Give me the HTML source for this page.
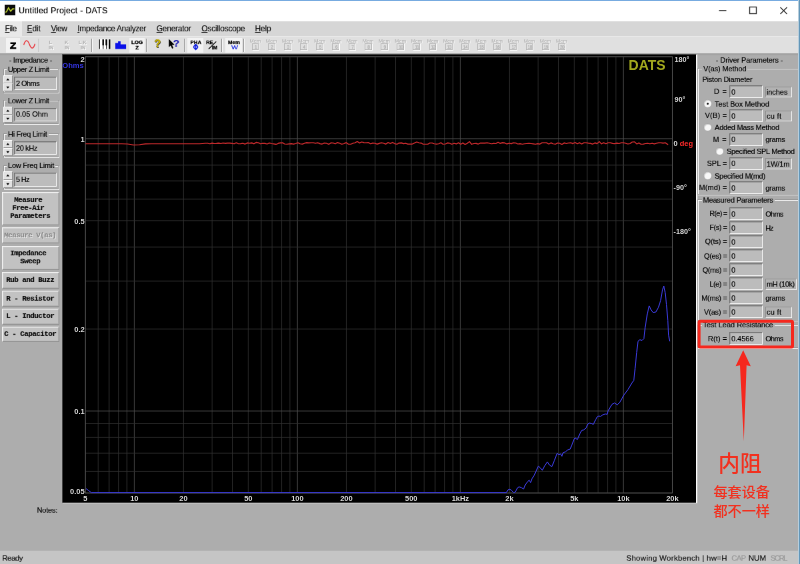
<!DOCTYPE html><html><head><meta charset="utf-8"><title>Untitled Project - DATS</title><style>
html,body{margin:0;padding:0;background:#adadad;}
body{width:800px;height:564px;overflow:hidden;position:relative;font-family:"Liberation Sans",sans-serif;}
#app{position:absolute;left:0;top:0;width:1200px;height:846px;transform:scale(0.6666667);transform-origin:0 0;background:#adadad;overflow:hidden;color:#000;-webkit-text-stroke-width:0.2px;will-change:transform;}
#app div,#app span{position:absolute;box-sizing:border-box;}
.t{white-space:nowrap;line-height:1;}
.titlebar{left:0;top:0;width:1200px;height:32px;background:#fff;border-top:1.5px solid #4a8fd6;}
.menubar{left:0;top:32px;width:1200px;height:22px;background:#d6d6d6;}
.toolbar{left:0;top:54px;width:1200px;height:26px;background:#e0e0e0;border-top:1px solid #eaeaea;}
.tbline{left:0;top:80px;width:1200px;height:2.5px;background:linear-gradient(#9c9c9c,#a8a8a8);}
.status{left:0;top:826px;width:1200px;height:20px;background:#c5c5c5;}
.rborder{left:1196.5px;top:0;width:3.5px;height:846px;background:linear-gradient(90deg,#b9c6cf,#cfe4f2 40%,#5b93b8 60%,#4b84aa);}
.graph{background:#000;border-top:1px solid #555;border-left:1px solid #555;border-right:2px solid #fbfbfb;border-bottom:1.6px solid #f0f0f0;}
.grp{border:1px solid #959595;box-shadow:1px 1px 0 #fdfdfd, inset 1px 1px 0 #fdfdfd;}
.leg{background:#adadad;padding:0 2px;}
.fld{background:#bcbcbc;border:1px solid;border-color:#707070 #fcfcfc #fcfcfc #707070;box-shadow:inset 1px 1px 0 #9a9a9a;}
.btn{background:#c2c2c2;border:1px solid;border-color:#f6f6f6 #8e8e8e #8e8e8e #f6f6f6;box-shadow:inset -1px -1px 0 #b0b0b0,inset 1px 1px 0 #d4d4d4;}
.unit{background:#b2b2b2;border:1px solid;border-color:#8c8c8c #f6f6f6 #f6f6f6 #8c8c8c;}
.spin{background:#e2e2e2;border:1px solid;border-color:#fff #8c8c8c #8c8c8c #fff;}
.mono{font-family:"Liberation Mono",monospace;font-weight:bold;letter-spacing:-0.6px;color:#0a0a0a;}
.dis{color:#8a8a8a;text-shadow:1px 1px 0 #f0f0f0;}
.radio{border-radius:50%;background:#f8f8f8;border:1px solid #a6a6a6;box-shadow:inset 1px 1px 1px #c8c8c8;}
.dot{border-radius:50%;background:#111;}
.menu u{text-decoration:underline;}
.sep{width:2px;background:#8e8e8e;border-right:1px solid #fafafa;}
.pressed{background:#f3f3f3;}
svg{position:absolute;left:0;top:0;overflow:visible;}
#ov{will-change:transform;}
</style></head><body>
<div id="app">
<div class="titlebar">
<svg width="16" height="16" viewBox="0 0 12 12" style="left:6.5px;top:6px"><rect width="12" height="12" fill="#0b0b0b"/><polyline points="0.8,8.6 2,8 4.3,3.6 6.8,7.4 9,4.6 11,4.8" fill="none" stroke="#b5c92c" stroke-width="1.3"/></svg>
<span id="t_UntitledProjectDATS_18_9" class="t " style="top:8.52px;font-size:12.5px;left:28.05px;letter-spacing:0.227px;color:#000;">Untitled Project - DATS</span>
<svg width="120" height="30" viewBox="0 0 120 30" style="left:1070px;top:0px" fill="none" stroke="#2a2a2a" stroke-width="1.4"><path d="M8.5 14.8h11"/><rect x="54.5" y="9.5" width="10" height="10"/><path d="M100.5 10l10 10M110.5 10l-10 10"/></svg>
</div>
<div class="menubar menu">
<div class="" style="left:0.00px;top:0.00px;width:33.00px;height:21.60px;background:#e9e9e9;"></div>
<span id="t_File_5_7" class="t " style="top:5.27px;font-size:12px;left:7.50px;letter-spacing:-0.452px;color:#111;"><u>F</u>ile</span>
<span id="t_Edit_27_7" class="t " style="top:5.27px;font-size:12px;left:40.50px;letter-spacing:-0.113px;color:#111;"><u>E</u>dit</span>
<span id="t_View_51_7" class="t " style="top:5.27px;font-size:12px;left:76.50px;letter-spacing:-0.453px;color:#111;"><u>V</u>iew</span>
<span id="t_ImpedanceAnalyzer_77_7" class="t " style="top:5.27px;font-size:12px;left:116.25px;letter-spacing:-0.334px;color:#111;"><u>I</u>mpedance Analyzer</span>
<span id="t_Generator_156_7" class="t " style="top:5.27px;font-size:12px;left:234.75px;letter-spacing:-0.255px;color:#111;"><u>G</u>enerator</span>
<span id="t_Oscilloscope_201_7" class="t " style="top:5.27px;font-size:12px;left:302.25px;letter-spacing:-0.233px;color:#111;"><u>O</u>scilloscope</span>
<span id="t_Help_255_7" class="t " style="top:5.27px;font-size:12px;left:382.50px;letter-spacing:-0.172px;color:#111;"><u>H</u>elp</span>
</div>
<div class="toolbar">
<div class="pressed" style="left:9.00px;top:1.95px;width:21.00px;height:22.50px;"><span id="t_Z_3_7" class="t " style="top:4.76px;font-size:13.5px;left:5.85px;color:#000;font-weight:bold;-webkit-text-stroke:.9px #000;transform:scaleX(1.12);transform-origin:0 0;">Z</span></div>
<div class="" style="left:33.00px;top:1.95px;width:22.50px;height:22.50px;"><svg width="22.50" height="22.50" viewBox="0 0 15 15" style="left:0;top:0;"><path d="M1.75 6.9C3.5 1.4 5.5 1.4 7.4 6.4S11.3 11.4 13 5.8" fill="none" stroke="#e8333a" stroke-width="1"/></svg></div>
<div class="sep" style="left:58px;top:3px;height:20px;"></div>
<span id="t_L_50_5" class="t " style="top:4.58px;font-size:7.5px;left:75.75px;transform:translateX(-50%);color:#b4b4b4;font-weight:bold;text-shadow:1px 1px 0 #fff;">L</span>
<span id="t_IN_51_10" class="t " style="top:12.68px;font-size:7.5px;left:76.65px;transform:translateX(-50%);color:#b4b4b4;font-weight:bold;text-shadow:1px 1px 0 #fff;">IN</span>
<span id="t_K_66_5" class="t " style="top:4.58px;font-size:7.5px;left:99.75px;transform:translateX(-50%);color:#b4b4b4;font-weight:bold;text-shadow:1px 1px 0 #fff;">K</span>
<span id="t_IN_67_10" class="t " style="top:12.68px;font-size:7.5px;left:100.65px;transform:translateX(-50%);color:#b4b4b4;font-weight:bold;text-shadow:1px 1px 0 #fff;">IN</span>
<span id="t_LK_82_5" class="t " style="top:4.58px;font-size:7.5px;left:123.75px;transform:translateX(-50%);color:#b4b4b4;font-weight:bold;text-shadow:1px 1px 0 #fff;">L K</span>
<span id="t_IN_83_10" class="t " style="top:12.68px;font-size:7.5px;left:124.65px;transform:translateX(-50%);color:#b4b4b4;font-weight:bold;text-shadow:1px 1px 0 #fff;">IN</span>
<div class="sep" style="left:137px;top:3px;height:20px;"></div>
<div class="" style="left:145.50px;top:1.95px;width:22.50px;height:22.50px;"><svg width="22.50" height="22.50" viewBox="0 0 15 15" style="left:0;top:0;"><rect x="1.3" y="1" width="12.2" height="10.4" fill="#fff"/><g fill="#000"><rect x="1.8" y="1.4" width=".8" height="9.6"/><rect x="5" y="1.4" width="1.6" height="6"/><rect x="5.5" y="7" width=".7" height="4"/><rect x="8.2" y="1.4" width="1.7" height="6"/><rect x="8.8" y="7" width=".7" height="4"/><rect x="11.4" y="1.4" width="1.6" height="9.6"/></g></svg></div>
<div class="" style="left:169.50px;top:1.95px;width:22.50px;height:22.50px;"><svg width="22.50" height="22.50" viewBox="0 0 15 15" style="left:0;top:0;"><path d="M2 11V5h2.75V3.3h2.5v3h5.5V11z" fill="#0a10e8"/></svg></div>
<div class="pressed" style="left:194.25px;top:1.95px;width:22.50px;height:22.50px;"><span id="t_LOG_7_4" class="t " style="top:3.29px;font-size:8px;left:11.40px;transform:translateX(-50%);color:#000;font-weight:bold;-webkit-text-stroke:.4px #000;">LOG</span><span id="t_Z_7_9" class="t " style="top:10.64px;font-size:8px;left:11.40px;transform:translateX(-50%);color:#000;font-weight:bold;-webkit-text-stroke:.4px #000;">Z</span></div>
<div class="sep" style="left:219px;top:3px;height:20px;"></div>
<div class="" style="left:225.00px;top:1.95px;width:22.50px;height:22.50px;"><span id="t__7_5" class="t " style="top:0.58px;font-size:16px;left:11.40px;transform:translateX(-50%);color:#c9b400;font-weight:bold;text-shadow:0.7px 0.7px 0 #333,-0.5px -0.5px 0 #444;">?</span></div>
<div class="" style="left:249.00px;top:1.95px;width:24.00px;height:22.50px;"><svg width="24.00" height="22.50" viewBox="0 0 16 15" style="left:0;top:0;"><path d="M2.8 1v8.2l1.9-1.7 1.4 3.1 1.3-.6-1.4-3.1h2.6z" fill="#000"/></svg><span id="t__10_5" class="t " style="top:0.22px;font-size:15.5px;left:15.45px;transform:translateX(-50%);color:#1a1ab0;font-weight:bold;">?</span></div>
<div class="sep" style="left:276px;top:3px;height:20px;"></div>
<div class="pressed" style="left:281.25px;top:1.95px;width:24.15px;height:22.50px;"><span id="t_PHA_8_4" class="t " style="top:2.78px;font-size:7.8px;left:12.60px;transform:translateX(-50%);color:#000;font-weight:bold;-webkit-text-stroke:.3px #000;">PHA</span><svg width="24.00" height="22.50" viewBox="0 0 16 15" style="left:0;top:0;"><g fill="none" stroke="#1020e0" stroke-width="1"><ellipse cx="8.4" cy="9" rx="2" ry="1.5"/><path d="M8.4 6.4v5.2M7.3 7.4l1.1-1.1 1.1 1.1M7.3 10.6l1.1 1.1 1.1-1.1"/></g></svg></div>
<div class="" style="left:306.00px;top:1.95px;width:24.00px;height:22.50px;"><svg width="24.00" height="22.50" viewBox="0 0 16 15" style="left:0;top:0;"><path d="M4.6 11L12.2 3.6" stroke="#000" stroke-width="0.85"/></svg><span id="t_RE_5_4" class="t " style="top:2.92px;font-size:7.5px;left:8.40px;transform:translateX(-50%);color:#000;font-weight:bold;-webkit-text-stroke:.3px #000;">RE</span><span id="t_IM_10_9" class="t " style="top:10.87px;font-size:7.5px;left:15.90px;transform:translateX(-50%);color:#000;font-weight:bold;-webkit-text-stroke:.3px #000;">IM</span></div>
<div class="sep" style="left:332px;top:3px;height:20px;"></div>
<div class="pressed" style="left:338.25px;top:1.95px;width:24.75px;height:22.50px;"><span id="t_Mem_8_4" class="t " style="top:2.78px;font-size:7.8px;left:12.75px;transform:translateX(-50%);color:#000;font-weight:bold;-webkit-text-stroke:.3px #000;">Mem</span><span id="t_W_8_9" class="t " style="top:10.11px;font-size:8.5px;left:13.35px;transform:translateX(-50%);color:#1020e0;transform:translateX(-50%) scaleX(1.25);">W</span></div>
<div class="sep" style="left:365px;top:3px;height:20px;"></div>
<span id="t_Mem_255_4" class="t " style="top:2.82px;font-size:7.5px;left:382.95px;transform:translateX(-50%);color:#b4b4b4;text-shadow:1px 1px 0 #fff;">Mem</span>
<div class="" style="left:377.55px;top:10.09px;width:10.80px;height:9.60px;border:1px solid #b4b4b4;box-shadow:1px 1px 0 #fff;"><span id="t_1_3_3" class="t " style="top:1.45px;font-size:6.5px;left:5.10px;transform:translateX(-50%);color:#aaa;letter-spacing:-0.5px;">1</span></div>
<span id="t_Mem_271_4" class="t " style="top:2.82px;font-size:7.5px;left:407.13px;transform:translateX(-50%);color:#b4b4b4;text-shadow:1px 1px 0 #fff;">Mem</span>
<div class="" style="left:401.73px;top:10.09px;width:10.80px;height:9.60px;border:1px solid #b4b4b4;box-shadow:1px 1px 0 #fff;"><span id="t_2_3_3" class="t " style="top:1.45px;font-size:6.5px;left:5.10px;transform:translateX(-50%);color:#aaa;letter-spacing:-0.5px;">2</span></div>
<span id="t_Mem_287_4" class="t " style="top:2.82px;font-size:7.5px;left:431.31px;transform:translateX(-50%);color:#b4b4b4;text-shadow:1px 1px 0 #fff;">Mem</span>
<div class="" style="left:425.91px;top:10.09px;width:10.80px;height:9.60px;border:1px solid #b4b4b4;box-shadow:1px 1px 0 #fff;"><span id="t_3_3_3" class="t " style="top:1.45px;font-size:6.5px;left:5.10px;transform:translateX(-50%);color:#aaa;letter-spacing:-0.5px;">3</span></div>
<span id="t_Mem_303_4" class="t " style="top:2.82px;font-size:7.5px;left:455.49px;transform:translateX(-50%);color:#b4b4b4;text-shadow:1px 1px 0 #fff;">Mem</span>
<div class="" style="left:450.09px;top:10.09px;width:10.80px;height:9.60px;border:1px solid #b4b4b4;box-shadow:1px 1px 0 #fff;"><span id="t_4_3_3" class="t " style="top:1.45px;font-size:6.5px;left:5.10px;transform:translateX(-50%);color:#aaa;letter-spacing:-0.5px;">4</span></div>
<span id="t_Mem_319_4" class="t " style="top:2.82px;font-size:7.5px;left:479.67px;transform:translateX(-50%);color:#b4b4b4;text-shadow:1px 1px 0 #fff;">Mem</span>
<div class="" style="left:474.27px;top:10.09px;width:10.80px;height:9.60px;border:1px solid #b4b4b4;box-shadow:1px 1px 0 #fff;"><span id="t_5_3_3" class="t " style="top:1.45px;font-size:6.5px;left:5.10px;transform:translateX(-50%);color:#aaa;letter-spacing:-0.5px;">5</span></div>
<span id="t_Mem_335_4" class="t " style="top:2.82px;font-size:7.5px;left:503.85px;transform:translateX(-50%);color:#b4b4b4;text-shadow:1px 1px 0 #fff;">Mem</span>
<div class="" style="left:498.45px;top:10.09px;width:10.80px;height:9.60px;border:1px solid #b4b4b4;box-shadow:1px 1px 0 #fff;"><span id="t_6_3_3" class="t " style="top:1.45px;font-size:6.5px;left:5.10px;transform:translateX(-50%);color:#aaa;letter-spacing:-0.5px;">6</span></div>
<span id="t_Mem_352_4" class="t " style="top:2.82px;font-size:7.5px;left:528.03px;transform:translateX(-50%);color:#b4b4b4;text-shadow:1px 1px 0 #fff;">Mem</span>
<div class="" style="left:522.63px;top:10.09px;width:10.80px;height:9.60px;border:1px solid #b4b4b4;box-shadow:1px 1px 0 #fff;"><span id="t_7_3_3" class="t " style="top:1.45px;font-size:6.5px;left:5.10px;transform:translateX(-50%);color:#aaa;letter-spacing:-0.5px;">7</span></div>
<span id="t_Mem_368_4" class="t " style="top:2.82px;font-size:7.5px;left:552.21px;transform:translateX(-50%);color:#b4b4b4;text-shadow:1px 1px 0 #fff;">Mem</span>
<div class="" style="left:546.81px;top:10.09px;width:10.80px;height:9.60px;border:1px solid #b4b4b4;box-shadow:1px 1px 0 #fff;"><span id="t_8_3_3" class="t " style="top:1.45px;font-size:6.5px;left:5.10px;transform:translateX(-50%);color:#aaa;letter-spacing:-0.5px;">8</span></div>
<span id="t_Mem_384_4" class="t " style="top:2.82px;font-size:7.5px;left:576.39px;transform:translateX(-50%);color:#b4b4b4;text-shadow:1px 1px 0 #fff;">Mem</span>
<div class="" style="left:570.99px;top:10.09px;width:10.80px;height:9.60px;border:1px solid #b4b4b4;box-shadow:1px 1px 0 #fff;"><span id="t_9_3_3" class="t " style="top:1.45px;font-size:6.5px;left:5.10px;transform:translateX(-50%);color:#aaa;letter-spacing:-0.5px;">9</span></div>
<span id="t_Mem_400_4" class="t " style="top:2.82px;font-size:7.5px;left:600.57px;transform:translateX(-50%);color:#b4b4b4;text-shadow:1px 1px 0 #fff;">Mem</span>
<div class="" style="left:595.17px;top:10.09px;width:10.80px;height:9.60px;border:1px solid #b4b4b4;box-shadow:1px 1px 0 #fff;"><span id="t_10_3_3" class="t " style="top:1.45px;font-size:6.5px;left:5.10px;transform:translateX(-50%);color:#aaa;letter-spacing:-0.5px;">10</span></div>
<span id="t_Mem_416_4" class="t " style="top:2.82px;font-size:7.5px;left:624.75px;transform:translateX(-50%);color:#b4b4b4;text-shadow:1px 1px 0 #fff;">Mem</span>
<div class="" style="left:619.35px;top:10.09px;width:10.80px;height:9.60px;border:1px solid #b4b4b4;box-shadow:1px 1px 0 #fff;"><span id="t_11_3_3" class="t " style="top:1.45px;font-size:6.5px;left:5.10px;transform:translateX(-50%);color:#aaa;letter-spacing:-0.5px;">11</span></div>
<span id="t_Mem_432_4" class="t " style="top:2.82px;font-size:7.5px;left:648.93px;transform:translateX(-50%);color:#b4b4b4;text-shadow:1px 1px 0 #fff;">Mem</span>
<div class="" style="left:643.53px;top:10.09px;width:10.80px;height:9.60px;border:1px solid #b4b4b4;box-shadow:1px 1px 0 #fff;"><span id="t_12_3_3" class="t " style="top:1.45px;font-size:6.5px;left:5.10px;transform:translateX(-50%);color:#aaa;letter-spacing:-0.5px;">12</span></div>
<span id="t_Mem_448_4" class="t " style="top:2.82px;font-size:7.5px;left:673.11px;transform:translateX(-50%);color:#b4b4b4;text-shadow:1px 1px 0 #fff;">Mem</span>
<div class="" style="left:667.71px;top:10.09px;width:10.80px;height:9.60px;border:1px solid #b4b4b4;box-shadow:1px 1px 0 #fff;"><span id="t_13_3_3" class="t " style="top:1.45px;font-size:6.5px;left:5.10px;transform:translateX(-50%);color:#aaa;letter-spacing:-0.5px;">13</span></div>
<span id="t_Mem_464_4" class="t " style="top:2.82px;font-size:7.5px;left:697.29px;transform:translateX(-50%);color:#b4b4b4;text-shadow:1px 1px 0 #fff;">Mem</span>
<div class="" style="left:691.89px;top:10.09px;width:10.80px;height:9.60px;border:1px solid #b4b4b4;box-shadow:1px 1px 0 #fff;"><span id="t_14_3_3" class="t " style="top:1.45px;font-size:6.5px;left:5.10px;transform:translateX(-50%);color:#aaa;letter-spacing:-0.5px;">14</span></div>
<span id="t_Mem_480_4" class="t " style="top:2.82px;font-size:7.5px;left:721.47px;transform:translateX(-50%);color:#b4b4b4;text-shadow:1px 1px 0 #fff;">Mem</span>
<div class="" style="left:716.07px;top:10.09px;width:10.80px;height:9.60px;border:1px solid #b4b4b4;box-shadow:1px 1px 0 #fff;"><span id="t_15_3_3" class="t " style="top:1.45px;font-size:6.5px;left:5.10px;transform:translateX(-50%);color:#aaa;letter-spacing:-0.5px;">15</span></div>
<span id="t_Mem_497_4" class="t " style="top:2.82px;font-size:7.5px;left:745.65px;transform:translateX(-50%);color:#b4b4b4;text-shadow:1px 1px 0 #fff;">Mem</span>
<div class="" style="left:740.25px;top:10.09px;width:10.80px;height:9.60px;border:1px solid #b4b4b4;box-shadow:1px 1px 0 #fff;"><span id="t_16_3_3" class="t " style="top:1.45px;font-size:6.5px;left:5.10px;transform:translateX(-50%);color:#aaa;letter-spacing:-0.5px;">16</span></div>
<span id="t_Mem_513_4" class="t " style="top:2.82px;font-size:7.5px;left:769.83px;transform:translateX(-50%);color:#b4b4b4;text-shadow:1px 1px 0 #fff;">Mem</span>
<div class="" style="left:764.43px;top:10.09px;width:10.80px;height:9.60px;border:1px solid #b4b4b4;box-shadow:1px 1px 0 #fff;"><span id="t_17_3_3" class="t " style="top:1.45px;font-size:6.5px;left:5.10px;transform:translateX(-50%);color:#aaa;letter-spacing:-0.5px;">17</span></div>
<span id="t_Mem_529_4" class="t " style="top:2.82px;font-size:7.5px;left:794.01px;transform:translateX(-50%);color:#b4b4b4;text-shadow:1px 1px 0 #fff;">Mem</span>
<div class="" style="left:788.61px;top:10.09px;width:10.80px;height:9.60px;border:1px solid #b4b4b4;box-shadow:1px 1px 0 #fff;"><span id="t_18_3_3" class="t " style="top:1.45px;font-size:6.5px;left:5.10px;transform:translateX(-50%);color:#aaa;letter-spacing:-0.5px;">18</span></div>
<span id="t_Mem_545_4" class="t " style="top:2.82px;font-size:7.5px;left:818.19px;transform:translateX(-50%);color:#b4b4b4;text-shadow:1px 1px 0 #fff;">Mem</span>
<div class="" style="left:812.79px;top:10.09px;width:10.80px;height:9.60px;border:1px solid #b4b4b4;box-shadow:1px 1px 0 #fff;"><span id="t_19_3_3" class="t " style="top:1.45px;font-size:6.5px;left:5.10px;transform:translateX(-50%);color:#aaa;letter-spacing:-0.5px;">19</span></div>
<span id="t_Mem_561_4" class="t " style="top:2.82px;font-size:7.5px;left:842.37px;transform:translateX(-50%);color:#b4b4b4;text-shadow:1px 1px 0 #fff;">Mem</span>
<div class="" style="left:836.97px;top:10.09px;width:10.80px;height:9.60px;border:1px solid #b4b4b4;box-shadow:1px 1px 0 #fff;"><span id="t_20_3_3" class="t " style="top:1.45px;font-size:6.5px;left:5.10px;transform:translateX(-50%);color:#aaa;letter-spacing:-0.5px;">20</span></div>
</div>
<div class="tbline"></div>
<div class="graph" style="left:93.00px;top:81.00px;width:953.25px;height:673.95px;"></div>
<span id="t_Impedance_30_60" class="t " style="top:84.83px;font-size:11px;left:45.90px;transform:translateX(-50%);letter-spacing:-0.258px;">- Impedance -</span>
<div class="grp" style="left:4.50px;top:103.05px;width:83.25px;height:36.00px;"></div>
<span id="t_UpperZLimit_6_69" class="t leg" style="top:98.78px;font-size:11px;left:10.00px;letter-spacing:-0.349px;">Upper Z Limit</span>
<div class="spin" style="left:5.10px;top:112.95px;width:13.80px;height:12.15px;"><svg width="13.5" height="12" viewBox="0 0 9 8" style="left:-1px;top:-1px"><path d="M4.5 3L6.1 5H2.9z" fill="#000"/></svg></div>
<div class="spin" style="left:5.10px;top:125.10px;width:13.80px;height:12.15px;"><svg width="13.5" height="12" viewBox="0 0 9 8" style="left:-1px;top:-1px"><path d="M4.5 5.2L6.1 3.2H2.9z" fill="#000"/></svg></div>
<div class="fld" style="left:20.55px;top:114.90px;width:64.95px;height:20.40px;"></div>
<span id="t_2Ohms_16_83" class="t " style="top:119.63px;font-size:11px;left:24.00px;letter-spacing:-0.569px;">2 Ohms</span>
<div class="grp" style="left:4.50px;top:149.85px;width:83.25px;height:36.00px;"></div>
<span id="t_LowerZLimit_6_100" class="t leg" style="top:145.58px;font-size:11px;left:10.00px;letter-spacing:-0.349px;">Lower Z Limit</span>
<div class="spin" style="left:5.10px;top:159.75px;width:13.80px;height:12.15px;"><svg width="13.5" height="12" viewBox="0 0 9 8" style="left:-1px;top:-1px"><path d="M4.5 3L6.1 5H2.9z" fill="#000"/></svg></div>
<div class="spin" style="left:5.10px;top:171.90px;width:13.80px;height:12.15px;"><svg width="13.5" height="12" viewBox="0 0 9 8" style="left:-1px;top:-1px"><path d="M4.5 5.2L6.1 3.2H2.9z" fill="#000"/></svg></div>
<div class="fld" style="left:20.55px;top:161.70px;width:64.95px;height:20.40px;"></div>
<span id="t_005Ohm_16_114" class="t " style="top:166.43px;font-size:11px;left:24.00px;letter-spacing:-0.039px;">0.05 Ohm</span>
<div class="grp" style="left:4.50px;top:200.25px;width:83.25px;height:36.00px;"></div>
<span id="t_HiFreqLimit_6_134" class="t leg" style="top:195.98px;font-size:11px;left:10.00px;letter-spacing:-0.296px;">Hi Freq Limit</span>
<div class="spin" style="left:5.10px;top:210.15px;width:13.80px;height:12.15px;"><svg width="13.5" height="12" viewBox="0 0 9 8" style="left:-1px;top:-1px"><path d="M4.5 3L6.1 5H2.9z" fill="#000"/></svg></div>
<div class="spin" style="left:5.10px;top:222.30px;width:13.80px;height:12.15px;"><svg width="13.5" height="12" viewBox="0 0 9 8" style="left:-1px;top:-1px"><path d="M4.5 5.2L6.1 3.2H2.9z" fill="#000"/></svg></div>
<div class="fld" style="left:20.55px;top:212.10px;width:64.95px;height:20.40px;"></div>
<span id="t_20kHz_16_148" class="t " style="top:216.83px;font-size:11px;left:24.00px;letter-spacing:-0.408px;">20 kHz</span>
<div class="grp" style="left:4.50px;top:247.50px;width:83.25px;height:36.00px;"></div>
<span id="t_LowFreqLimit_6_165" class="t leg" style="top:243.23px;font-size:11px;left:10.00px;letter-spacing:-0.224px;">Low Freq Limit</span>
<div class="spin" style="left:5.10px;top:257.40px;width:13.80px;height:12.15px;"><svg width="13.5" height="12" viewBox="0 0 9 8" style="left:-1px;top:-1px"><path d="M4.5 3L6.1 5H2.9z" fill="#000"/></svg></div>
<div class="spin" style="left:5.10px;top:269.55px;width:13.80px;height:12.15px;"><svg width="13.5" height="12" viewBox="0 0 9 8" style="left:-1px;top:-1px"><path d="M4.5 5.2L6.1 3.2H2.9z" fill="#000"/></svg></div>
<div class="fld" style="left:20.55px;top:259.35px;width:64.95px;height:20.40px;"></div>
<span id="t_5Hz_16_179" class="t " style="top:264.08px;font-size:11px;left:24.00px;letter-spacing:-0.669px;">5 Hz</span>
<div class="btn" style="left:3.00px;top:288.00px;width:85.50px;height:49.80px;"><span id="t_Measure_25_7" class="t mono" style="top:5.93px;font-size:11px;left:38.25px;transform:translateX(-50%);">Measure</span><span id="t_FreeAir_25_15" class="t mono" style="top:17.93px;font-size:11px;left:38.25px;transform:translateX(-50%);">Free-Air</span><span id="t_Parameters_27_23" class="t mono" style="top:29.93px;font-size:11px;left:41.25px;transform:translateX(-50%);">Parameters</span></div>
<div class="btn" style="left:3.00px;top:341.40px;width:85.50px;height:24.00px;"><span id="t_MeasureVas_27_7" class="t mono dis" style="top:5.63px;font-size:11px;left:41.25px;transform:translateX(-50%);">Measure V(as)</span></div>
<div class="btn" style="left:3.00px;top:369.00px;width:85.50px;height:36.00px;"><span id="t_Impedance_25_6" class="t mono" style="top:5.03px;font-size:11px;left:38.25px;transform:translateX(-50%);">Impedance</span><span id="t_Sweep_27_14" class="t mono" style="top:17.03px;font-size:11px;left:41.25px;transform:translateX(-50%);">Sweep</span></div>
<div class="btn" style="left:3.00px;top:408.30px;width:85.50px;height:25.05px;"><span id="t_RubandBuzz_27_7" class="t mono" style="top:6.15px;font-size:11px;left:41.25px;transform:translateX(-50%);">Rub and Buzz</span></div>
<div class="btn" style="left:3.00px;top:436.20px;width:85.50px;height:23.55px;"><span id="t_RResistor_27_7" class="t mono" style="top:5.40px;font-size:11px;left:41.25px;transform:translateX(-50%);">R - Resistor</span></div>
<div class="btn" style="left:3.00px;top:462.90px;width:85.50px;height:23.70px;"><span id="t_LInductor_27_7" class="t mono" style="top:5.48px;font-size:11px;left:41.25px;transform:translateX(-50%);">L - Inductor</span></div>
<div class="btn" style="left:3.00px;top:489.60px;width:85.50px;height:23.10px;"><span id="t_CCapacitor_27_6" class="t mono" style="top:5.18px;font-size:11px;left:41.25px;transform:translateX(-50%);">C - Capacitor</span></div>
<span id="t_DriverParameters_749_60" class="t " style="top:84.83px;font-size:11px;left:1124.10px;transform:translateX(-50%);letter-spacing:-0.104px;">- Driver Parameters -</span>
<div class="grp" style="left:1045.80px;top:102.45px;width:154.20px;height:190.05px;"></div>
<span id="t_VasMethod_701_69" class="t leg" style="top:98.33px;font-size:11px;left:1052.95px;letter-spacing:-0.128px;">V(as) Method</span>
<span id="t_PistonDiameter_702_79" class="t " style="top:113.63px;font-size:11px;left:1053.45px;letter-spacing:-0.217px;">Piston Diameter</span>
<span id="t_D_727_91" class="t " style="top:132.23px;font-size:11px;left:1090.50px;transform:translateX(-100%);letter-spacing:0.688px;">D =</span><div class="fld" style="left:1093.50px;top:127.95px;width:50.70px;height:18.90px;"></div><span id="t_0_731_91" class="t " style="top:132.53px;font-size:11px;left:1096.95px;">0</span><div class="unit" style="left:1147.50px;top:129.60px;width:40.95px;height:16.80px;"></div><span id="t_inches_766_92" class="t " style="top:132.83px;font-size:11px;left:1149.90px;letter-spacing:-0.052px;">inches</span>
<div class="radio" style="left:1055.25px;top:149.25px;width:12.60px;height:12.60px;"><div class="dot" style="left:3.30px;top:3.30px;width:3.90px;height:3.90px;left:50%;top:50%;transform:translate(-50%,-50%);"></div></div><span id="t_TestBoxMethod_714_103" class="t " style="top:150.68px;font-size:11px;left:1072.05px;letter-spacing:-0.013px;">Test Box Method</span>
<span id="t_VB_727_115" class="t " style="top:168.23px;font-size:11px;left:1090.50px;transform:translateX(-100%);letter-spacing:0.253px;">V(B) =</span><div class="fld" style="left:1093.50px;top:163.95px;width:50.70px;height:18.90px;"></div><span id="t_0_731_115" class="t " style="top:168.53px;font-size:11px;left:1096.95px;">0</span><div class="unit" style="left:1147.50px;top:165.60px;width:40.95px;height:16.80px;"></div><span id="t_cuft_766_116" class="t " style="top:168.83px;font-size:11px;left:1149.90px;letter-spacing:0.341px;">cu ft</span>
<div class="radio" style="left:1055.25px;top:184.65px;width:12.60px;height:12.60px;"></div><span id="t_AddedMassMethod_714_127" class="t " style="top:186.08px;font-size:11px;left:1072.05px;letter-spacing:-0.244px;">Added Mass Method</span>
<span id="t_M_727_139" class="t " style="top:203.93px;font-size:11px;left:1090.50px;transform:translateX(-100%);letter-spacing:0.781px;">M =</span><div class="fld" style="left:1093.50px;top:199.65px;width:50.70px;height:18.90px;"></div><span id="t_0_731_139" class="t " style="top:204.23px;font-size:11px;left:1096.95px;">0</span><span id="t_grams_765_139" class="t " style="top:204.23px;font-size:11px;left:1148.25px;letter-spacing:-0.263px;">grams</span>
<div class="radio" style="left:1073.10px;top:220.80px;width:12.60px;height:12.60px;"></div><span id="t_SpecifiedSPLMethod_726_151" class="t " style="top:222.23px;font-size:11px;left:1089.90px;letter-spacing:-0.322px;">Specified SPL Method</span>
<span id="t_SPL_727_163" class="t " style="top:240.08px;font-size:11px;left:1090.50px;transform:translateX(-100%);letter-spacing:0.025px;">SPL =</span><div class="fld" style="left:1093.50px;top:235.80px;width:50.70px;height:18.90px;"></div><span id="t_0_731_163" class="t " style="top:240.38px;font-size:11px;left:1096.95px;">0</span><div class="unit" style="left:1147.50px;top:237.45px;width:40.95px;height:16.80px;"></div><span id="t_1W1m_766_163" class="t " style="top:240.68px;font-size:11px;left:1149.90px;letter-spacing:-0.069px;">1W/1m</span>
<div class="radio" style="left:1055.25px;top:257.10px;width:12.60px;height:12.60px;"></div><span id="t_SpecifiedMmd_714_175" class="t " style="top:258.53px;font-size:11px;left:1072.05px;letter-spacing:-0.289px;">Specified M(md)</span>
<span id="t_Mmd_727_187" class="t " style="top:276.38px;font-size:11px;left:1090.50px;transform:translateX(-100%);letter-spacing:0.107px;">M(md) =</span><div class="fld" style="left:1093.50px;top:272.10px;width:50.70px;height:18.90px;"></div><span id="t_0_731_187" class="t " style="top:276.68px;font-size:11px;left:1096.95px;">0</span><span id="t_grams_765_187" class="t " style="top:276.68px;font-size:11px;left:1148.25px;letter-spacing:-0.263px;">grams</span>
<div class="grp" style="left:1045.80px;top:298.80px;width:154.20px;height:181.95px;"></div>
<span id="t_MeasuredParameters_701_199" class="t leg" style="top:294.53px;font-size:11px;left:1052.50px;letter-spacing:-0.202px;">Measured Parameters</span>
<span id="t_Re_727_213" class="t " style="top:315.38px;font-size:11px;left:1090.50px;transform:translateX(-100%);letter-spacing:-0.771px;">R(e) =</span><div class="fld" style="left:1093.50px;top:311.10px;width:50.70px;height:18.90px;"></div><span id="t_0_731_213" class="t " style="top:315.68px;font-size:11px;left:1096.95px;">0</span><span id="t_Ohms_765_213" class="t " style="top:315.68px;font-size:11px;left:1148.25px;letter-spacing:-0.773px;">Ohms</span>
<span id="t_Fs_727_227" class="t " style="top:336.42px;font-size:11px;left:1090.50px;transform:translateX(-100%);letter-spacing:-0.464px;">F(s) =</span><div class="fld" style="left:1093.50px;top:332.14px;width:50.70px;height:18.90px;"></div><span id="t_0_731_227" class="t " style="top:336.72px;font-size:11px;left:1096.95px;">0</span><span id="t_Hz_765_227" class="t " style="top:336.72px;font-size:11px;left:1148.25px;letter-spacing:-1.102px;">Hz</span>
<span id="t_Qts_727_241" class="t " style="top:357.47px;font-size:11px;left:1090.50px;transform:translateX(-100%);letter-spacing:-0.132px;">Q(ts) =</span><div class="fld" style="left:1093.50px;top:353.19px;width:50.70px;height:18.90px;"></div><span id="t_0_731_241" class="t " style="top:357.77px;font-size:11px;left:1096.95px;">0</span>
<span id="t_Qes_727_255" class="t " style="top:378.51px;font-size:11px;left:1090.50px;transform:translateX(-100%);letter-spacing:-0.355px;">Q(es) =</span><div class="fld" style="left:1093.50px;top:374.23px;width:50.70px;height:18.90px;"></div><span id="t_0_731_255" class="t " style="top:378.81px;font-size:11px;left:1096.95px;">0</span>
<span id="t_Qms_727_269" class="t " style="top:399.56px;font-size:11px;left:1090.50px;transform:translateX(-100%);letter-spacing:-0.469px;">Q(ms) =</span><div class="fld" style="left:1093.50px;top:395.28px;width:50.70px;height:18.90px;"></div><span id="t_0_731_270" class="t " style="top:399.86px;font-size:11px;left:1096.95px;">0</span>
<span id="t_Le_727_283" class="t " style="top:420.60px;font-size:11px;left:1090.50px;transform:translateX(-100%);letter-spacing:-0.466px;">L(e) =</span><div class="fld" style="left:1093.50px;top:416.32px;width:50.70px;height:18.90px;"></div><span id="t_0_731_284" class="t " style="top:420.90px;font-size:11px;left:1096.95px;">0</span><div class="unit" style="left:1147.50px;top:417.97px;width:47.25px;height:16.80px;"></div><span id="t_mH10k_766_284" class="t " style="top:421.20px;font-size:11px;left:1149.90px;letter-spacing:-0.404px;">mH (10k)</span>
<span id="t_Mms_727_297" class="t " style="top:441.65px;font-size:11px;left:1090.50px;transform:translateX(-100%);letter-spacing:-0.342px;">M(ms) =</span><div class="fld" style="left:1093.50px;top:437.37px;width:50.70px;height:18.90px;"></div><span id="t_0_731_298" class="t " style="top:441.95px;font-size:11px;left:1096.95px;">0</span><span id="t_grams_765_298" class="t " style="top:441.95px;font-size:11px;left:1148.25px;letter-spacing:-0.263px;">grams</span>
<span id="t_Vas_727_311" class="t " style="top:462.69px;font-size:11px;left:1090.50px;transform:translateX(-100%);letter-spacing:-0.181px;">V(as) =</span><div class="fld" style="left:1093.50px;top:458.41px;width:50.70px;height:18.90px;"></div><span id="t_0_731_312" class="t " style="top:462.99px;font-size:11px;left:1096.95px;">0</span><div class="unit" style="left:1147.50px;top:460.06px;width:40.95px;height:16.80px;"></div><span id="t_cuft_766_312" class="t " style="top:463.29px;font-size:11px;left:1149.90px;letter-spacing:0.341px;">cu ft</span>
<div class="grp" style="left:1045.80px;top:486.90px;width:154.20px;height:35.10px;"></div>
<span id="t_TestLeadResistance_701_325" class="t leg" style="top:482.33px;font-size:11px;left:1052.50px;letter-spacing:-0.009px;">Test Lead Resistance</span>
<span id="t_Rt_727_338" class="t " style="top:502.73px;font-size:11px;left:1090.50px;transform:translateX(-100%);letter-spacing:0.115px;">R(t) =</span><div class="fld" style="left:1093.50px;top:498.45px;width:50.70px;height:18.90px;"></div><span id="t_04566_731_338" class="t " style="top:503.03px;font-size:11px;left:1096.95px;">0.4566</span><span id="t_Ohms_765_338" class="t " style="top:503.03px;font-size:11px;left:1148.25px;letter-spacing:-0.773px;">Ohms</span>
<span id="t_Notes_37_510" class="t " style="top:760.28px;font-size:11px;left:55.50px;letter-spacing:-0.174px;">Notes:</span>
<div class="status">
<span id="t_Ready_2_7" class="t " style="top:6.04px;font-size:11.5px;left:3.30px;letter-spacing:-0.529px;color:#111;">Ready</span>
<span id="t_ShowingWorkbenchhwH_626_7" class="t " style="top:6.04px;font-size:11.5px;left:939.45px;letter-spacing:0.297px;color:#111;">Showing Workbench | hw=H</span>
<span id="t_CAP_731_7" class="t " style="top:6.04px;font-size:11.5px;left:1097.25px;letter-spacing:-0.885px;color:#9a9a9a;">CAP</span>
<span id="t_NUM_748_7" class="t " style="top:6.04px;font-size:11.5px;left:1122.75px;letter-spacing:0.016px;color:#111;">NUM</span>
<span id="t_SCRL_770_7" class="t " style="top:6.04px;font-size:11.5px;left:1155.75px;letter-spacing:-1.672px;color:#9a9a9a;">SCRL</span>
</div>
<div class="rborder"></div>
</div>
<svg id="ov" width="800" height="564" viewBox="0 0 800 564" font-family="&quot;Liberation Sans&quot;,sans-serif">
<g stroke-width="0.7" fill="none">
<line x1="85.30" y1="56.76" x2="85.30" y2="493.00" stroke="#313131"/>
<line x1="98.21" y1="56.76" x2="98.21" y2="493.00" stroke="#313131"/>
<line x1="109.12" y1="56.76" x2="109.12" y2="493.00" stroke="#313131"/>
<line x1="118.57" y1="56.76" x2="118.57" y2="493.00" stroke="#313131"/>
<line x1="126.91" y1="56.76" x2="126.91" y2="493.00" stroke="#313131"/>
<line x1="134.37" y1="56.76" x2="134.37" y2="493.00" stroke="#505050"/>
<line x1="183.44" y1="56.76" x2="183.44" y2="493.00" stroke="#313131"/>
<line x1="212.14" y1="56.76" x2="212.14" y2="493.00" stroke="#313131"/>
<line x1="232.50" y1="56.76" x2="232.50" y2="493.00" stroke="#313131"/>
<line x1="248.30" y1="56.76" x2="248.30" y2="493.00" stroke="#313131"/>
<line x1="261.21" y1="56.76" x2="261.21" y2="493.00" stroke="#313131"/>
<line x1="272.12" y1="56.76" x2="272.12" y2="493.00" stroke="#313131"/>
<line x1="281.57" y1="56.76" x2="281.57" y2="493.00" stroke="#313131"/>
<line x1="289.91" y1="56.76" x2="289.91" y2="493.00" stroke="#313131"/>
<line x1="297.37" y1="56.76" x2="297.37" y2="493.00" stroke="#505050"/>
<line x1="346.44" y1="56.76" x2="346.44" y2="493.00" stroke="#313131"/>
<line x1="375.14" y1="56.76" x2="375.14" y2="493.00" stroke="#313131"/>
<line x1="395.50" y1="56.76" x2="395.50" y2="493.00" stroke="#313131"/>
<line x1="411.30" y1="56.76" x2="411.30" y2="493.00" stroke="#313131"/>
<line x1="424.21" y1="56.76" x2="424.21" y2="493.00" stroke="#313131"/>
<line x1="435.12" y1="56.76" x2="435.12" y2="493.00" stroke="#313131"/>
<line x1="444.57" y1="56.76" x2="444.57" y2="493.00" stroke="#313131"/>
<line x1="452.91" y1="56.76" x2="452.91" y2="493.00" stroke="#313131"/>
<line x1="460.37" y1="56.76" x2="460.37" y2="493.00" stroke="#505050"/>
<line x1="509.44" y1="56.76" x2="509.44" y2="493.00" stroke="#313131"/>
<line x1="538.14" y1="56.76" x2="538.14" y2="493.00" stroke="#313131"/>
<line x1="558.50" y1="56.76" x2="558.50" y2="493.00" stroke="#313131"/>
<line x1="574.30" y1="56.76" x2="574.30" y2="493.00" stroke="#313131"/>
<line x1="587.21" y1="56.76" x2="587.21" y2="493.00" stroke="#313131"/>
<line x1="598.12" y1="56.76" x2="598.12" y2="493.00" stroke="#313131"/>
<line x1="607.57" y1="56.76" x2="607.57" y2="493.00" stroke="#313131"/>
<line x1="615.91" y1="56.76" x2="615.91" y2="493.00" stroke="#313131"/>
<line x1="623.37" y1="56.76" x2="623.37" y2="493.00" stroke="#505050"/>
<line x1="672.44" y1="56.76" x2="672.44" y2="493.00" stroke="#313131"/>
<line x1="85.30" y1="493.00" x2="672.44" y2="493.00" stroke="#313131"/>
<line x1="85.30" y1="471.44" x2="672.44" y2="471.44" stroke="#313131"/>
<line x1="85.30" y1="453.21" x2="672.44" y2="453.21" stroke="#313131"/>
<line x1="85.30" y1="437.42" x2="672.44" y2="437.42" stroke="#313131"/>
<line x1="85.30" y1="423.49" x2="672.44" y2="423.49" stroke="#313131"/>
<line x1="85.30" y1="411.03" x2="672.44" y2="411.03" stroke="#505050"/>
<line x1="85.30" y1="329.06" x2="672.44" y2="329.06" stroke="#313131"/>
<line x1="85.30" y1="281.11" x2="672.44" y2="281.11" stroke="#313131"/>
<line x1="85.30" y1="247.09" x2="672.44" y2="247.09" stroke="#313131"/>
<line x1="85.30" y1="220.70" x2="672.44" y2="220.70" stroke="#313131"/>
<line x1="85.30" y1="199.14" x2="672.44" y2="199.14" stroke="#313131"/>
<line x1="85.30" y1="180.91" x2="672.44" y2="180.91" stroke="#313131"/>
<line x1="85.30" y1="165.12" x2="672.44" y2="165.12" stroke="#313131"/>
<line x1="85.30" y1="151.19" x2="672.44" y2="151.19" stroke="#313131"/>
<line x1="85.30" y1="138.73" x2="672.44" y2="138.73" stroke="#505050"/>
<line x1="85.30" y1="56.76" x2="672.44" y2="56.76" stroke="#313131"/>
<rect x="85.30" y="56.76" width="587.14" height="436.24" stroke="#545454"/>
</g>
<g font-size="7.45" font-weight="bold" fill="#d6d6d6">
<text x="84.6" y="61.76" text-anchor="end">2</text>
<text x="84.6" y="141.53" text-anchor="end">1</text>
<text x="84.6" y="223.50" text-anchor="end">0.5</text>
<text x="84.6" y="331.86" text-anchor="end">0.2</text>
<text x="84.6" y="413.83" text-anchor="end">0.1</text>
<text x="84.6" y="494" text-anchor="end">0.05</text>
<text x="85.30" y="501.3" text-anchor="middle">5</text>
<text x="134.37" y="501.3" text-anchor="middle">10</text>
<text x="183.44" y="501.3" text-anchor="middle">20</text>
<text x="248.30" y="501.3" text-anchor="middle">50</text>
<text x="297.37" y="501.3" text-anchor="middle">100</text>
<text x="346.44" y="501.3" text-anchor="middle">200</text>
<text x="411.30" y="501.3" text-anchor="middle">500</text>
<text x="460.37" y="501.3" text-anchor="middle">1kHz</text>
<text x="509.44" y="501.3" text-anchor="middle">2k</text>
<text x="574.30" y="501.3" text-anchor="middle">5k</text>
<text x="623.37" y="501.3" text-anchor="middle">10k</text>
<text x="672.44" y="501.3" text-anchor="middle">20k</text>
<text x="674.4" y="62.20" font-size="7.2">180°</text>
<text x="674.4" y="101.80" font-size="7.2">90°</text>
<text x="673.6" y="189.80" font-size="7.2">-90°</text>
<text x="673.6" y="233.80" font-size="7.2">-180°</text>
<text x="673.6" y="145.9">0 <tspan fill="#ff2a2a">deg</tspan></text>
</g>
<text x="62.3" y="67.6" font-size="7.6" font-weight="bold" fill="#3434e0">Ohms</text>
<text x="628.6" y="70.1" font-size="14.2" font-weight="bold" fill="#a2a81e" textLength="37" lengthAdjust="spacingAndGlyphs">DATS</text>
<polyline fill="none" stroke="#3a3ad8" stroke-width="1" stroke-linejoin="round" points="86.0,488.6 88.5,490.5 91.3,492.6 500.0,492.6 506.4,492.6 508.0,489.8 509.9,489.3 511.5,490.3 513.6,492.6 515.2,492.2 517.6,487.7 519.1,486.9 521.5,487.7 523.6,489.0 525.2,485.0 527.9,481.3 529.2,480.2 530.6,482.6 531.9,478.9 534.3,475.1 538.3,466.2 539.9,467.4 542.3,470.3 544.7,465.8 547.4,461.9 549.5,465.1 551.9,466.6 554.3,460.7 557.1,453.4 559.0,454.7 560.6,453.9 561.9,456.3 563.0,452.8 565.4,451.8 567.8,449.9 570.2,449.1 571.8,445.1 574.2,439.0 575.0,437.9 577.4,439.5 579.8,433.9 581.7,430.4 583.8,429.9 586.2,427.9 587.8,424.0 589.4,423.1 591.8,423.6 593.3,424.4 595.7,419.6 597.3,416.7 598.9,416.1 600.5,416.4 602.9,414.8 605.3,414.0 607.2,414.3 608.0,411.0 612.0,404.3 614.6,403.0 617.3,404.8 619.9,402.2 623.9,395.0 627.9,389.7 631.9,383.0 633.8,380.4 635.1,368.4 636.7,352.4 638.0,341.3 639.9,339.7 642.0,340.5 643.9,338.6 645.2,327.2 647.3,313.9 649.2,305.9 651.1,309.9 653.2,312.6 655.9,312.0 658.5,307.2 660.6,300.6 662.5,289.9 663.8,286.0 665.2,292.6 666.5,304.6 667.8,320.5 668.6,335.2 669.7,341.3"/>
<polyline fill="none" stroke="#bc282b" stroke-width="1.15" transform="translate(0,0.4)" stroke-linejoin="round" points="85.5,143.4 91.5,143.4 97.5,143.4 103.5,143.4 109.5,143.4 115.5,143.4 121.5,143.4 127.5,143.6 133.5,144.6 139.5,144.4 145.5,143.5 151.5,143.4 157.5,143.4 163.5,143.4 169.5,143.4 175.5,143.4 181.5,143.4 187.5,143.4 193.5,143.4 199.5,143.4 205.5,142.9 207.7,142.8 209.9,143.3 212.1,142.7 214.3,143.1 216.5,143.0 218.7,142.7 220.9,143.1 223.1,142.6 225.3,143.0 227.5,142.7 229.7,142.7 231.9,143.0 234.1,143.4 236.3,142.4 238.5,143.3 240.7,143.2 242.9,142.8 245.1,143.7 247.3,142.5 249.5,142.8 251.7,142.5 253.9,143.4 256.1,142.0 258.3,142.3 260.5,143.4 262.7,142.8 264.9,143.0 267.1,143.6 269.3,142.6 271.5,143.1 273.7,143.5 275.9,144.0 278.1,143.0 280.3,142.5 282.5,142.3 284.7,143.6 286.9,143.8 289.1,143.5 291.3,143.2 293.5,143.7 295.7,143.1 297.9,142.3 300.1,143.4 302.3,143.7 304.5,142.9 306.7,142.2 308.9,142.5 311.1,142.3 313.3,142.4 315.5,142.9 317.7,142.3 319.9,143.2 322.1,143.7 324.3,142.7 326.5,142.8 328.7,143.9 330.9,142.5 333.1,142.6 335.3,143.3 337.5,142.2 339.7,142.9 341.9,143.9 344.1,143.1 346.3,142.2 348.5,143.8 350.7,143.8 352.9,142.9 355.1,142.4 357.3,141.1 359.5,142.6 361.7,141.6 363.9,142.2 366.1,142.4 368.3,142.2 370.5,143.3 372.7,142.7 374.9,142.9 377.1,143.7 379.3,143.0 381.5,142.4 383.7,142.8 385.9,143.7 388.1,142.2 390.3,143.2 392.5,142.0 394.7,143.2 396.9,143.8 399.1,142.7 401.3,142.5 403.5,143.2 405.7,142.8 407.9,143.7 410.1,143.7 412.3,143.7 414.5,142.6 416.7,141.6 418.9,142.3 421.1,142.7 423.3,143.9 425.5,143.9 427.7,143.9 429.9,142.6 432.1,142.6 434.3,143.3 436.5,143.7 438.7,143.4 440.9,142.4 443.1,143.8 445.3,143.6 447.5,142.5 449.7,142.8 451.9,143.9 454.1,142.9 456.3,143.5 458.5,142.4 460.7,143.8 462.9,142.5 465.1,144.0 467.3,142.8 469.5,141.2 471.7,143.9 473.9,143.1 476.1,143.0 478.3,143.7 480.5,142.7 482.7,142.6 484.9,142.7 487.1,142.4 489.3,142.8 491.5,143.3 493.7,143.0 495.9,143.1 498.1,141.9 500.3,143.0 502.5,142.2 504.7,142.5 506.9,143.5 509.1,142.8 511.3,143.2 513.5,142.4 515.7,142.6 517.9,143.6 520.1,143.2 522.3,143.8 524.5,143.3 526.7,143.1 528.9,143.0 531.1,143.1 533.3,143.5 535.5,143.9 537.7,143.2 539.9,143.7 542.1,142.4 544.3,142.3 546.5,142.3 548.7,143.6 550.9,142.5 553.1,143.4 555.3,143.8 557.5,142.6 559.7,142.9 561.9,144.0 564.1,142.5 566.3,143.1 568.5,142.6 570.7,142.3 572.9,143.2 575.1,142.2 577.3,143.3 579.5,142.3 581.7,143.6 583.9,142.4 586.1,142.3 588.3,142.7 590.5,143.0 592.7,143.7 594.9,142.5 597.1,143.2 599.3,141.2 601.5,143.4 603.7,142.3 605.9,143.3 608.1,142.4 610.3,142.3 612.5,143.0 614.7,143.2 616.9,142.7 619.1,143.1 621.3,142.4 623.5,142.3 625.7,142.8 627.9,143.6 630.1,143.1 632.3,141.6 634.5,141.5 636.7,143.5 638.9,142.5 641.1,143.9 643.3,143.7 645.5,143.1 647.7,142.9 649.9,143.4 652.1,142.8 654.3,143.5 656.5,142.9 658.7,142.3 660.9,142.3 663.1,142.7 665.3,142.4 667.5,143.8 668.0,144.6"/>
<rect x="699.1" y="321.2" width="93.4" height="25.7" fill="none" stroke="#f5281e" stroke-width="3" rx="1"/>
<path d="M743.2 350.2L750.8 366.2L746.6 365.2L743.8 441.5L740 365.2L735.6 366.2Z" fill="#f5281e"/>
<g fill="#f2301f" font-weight="500" font-family="&quot;Liberation Sans&quot;,&quot;Noto Sans CJK SC&quot;,sans-serif" text-anchor="middle">
<text x="739.9" y="471.2" font-size="21.6">内阻</text>
<text x="741.7" y="497" font-size="14.1">每套设备</text>
<text x="741.7" y="516.4" font-size="14.1">都不一样</text>
</g>
</svg>
</body></html>
